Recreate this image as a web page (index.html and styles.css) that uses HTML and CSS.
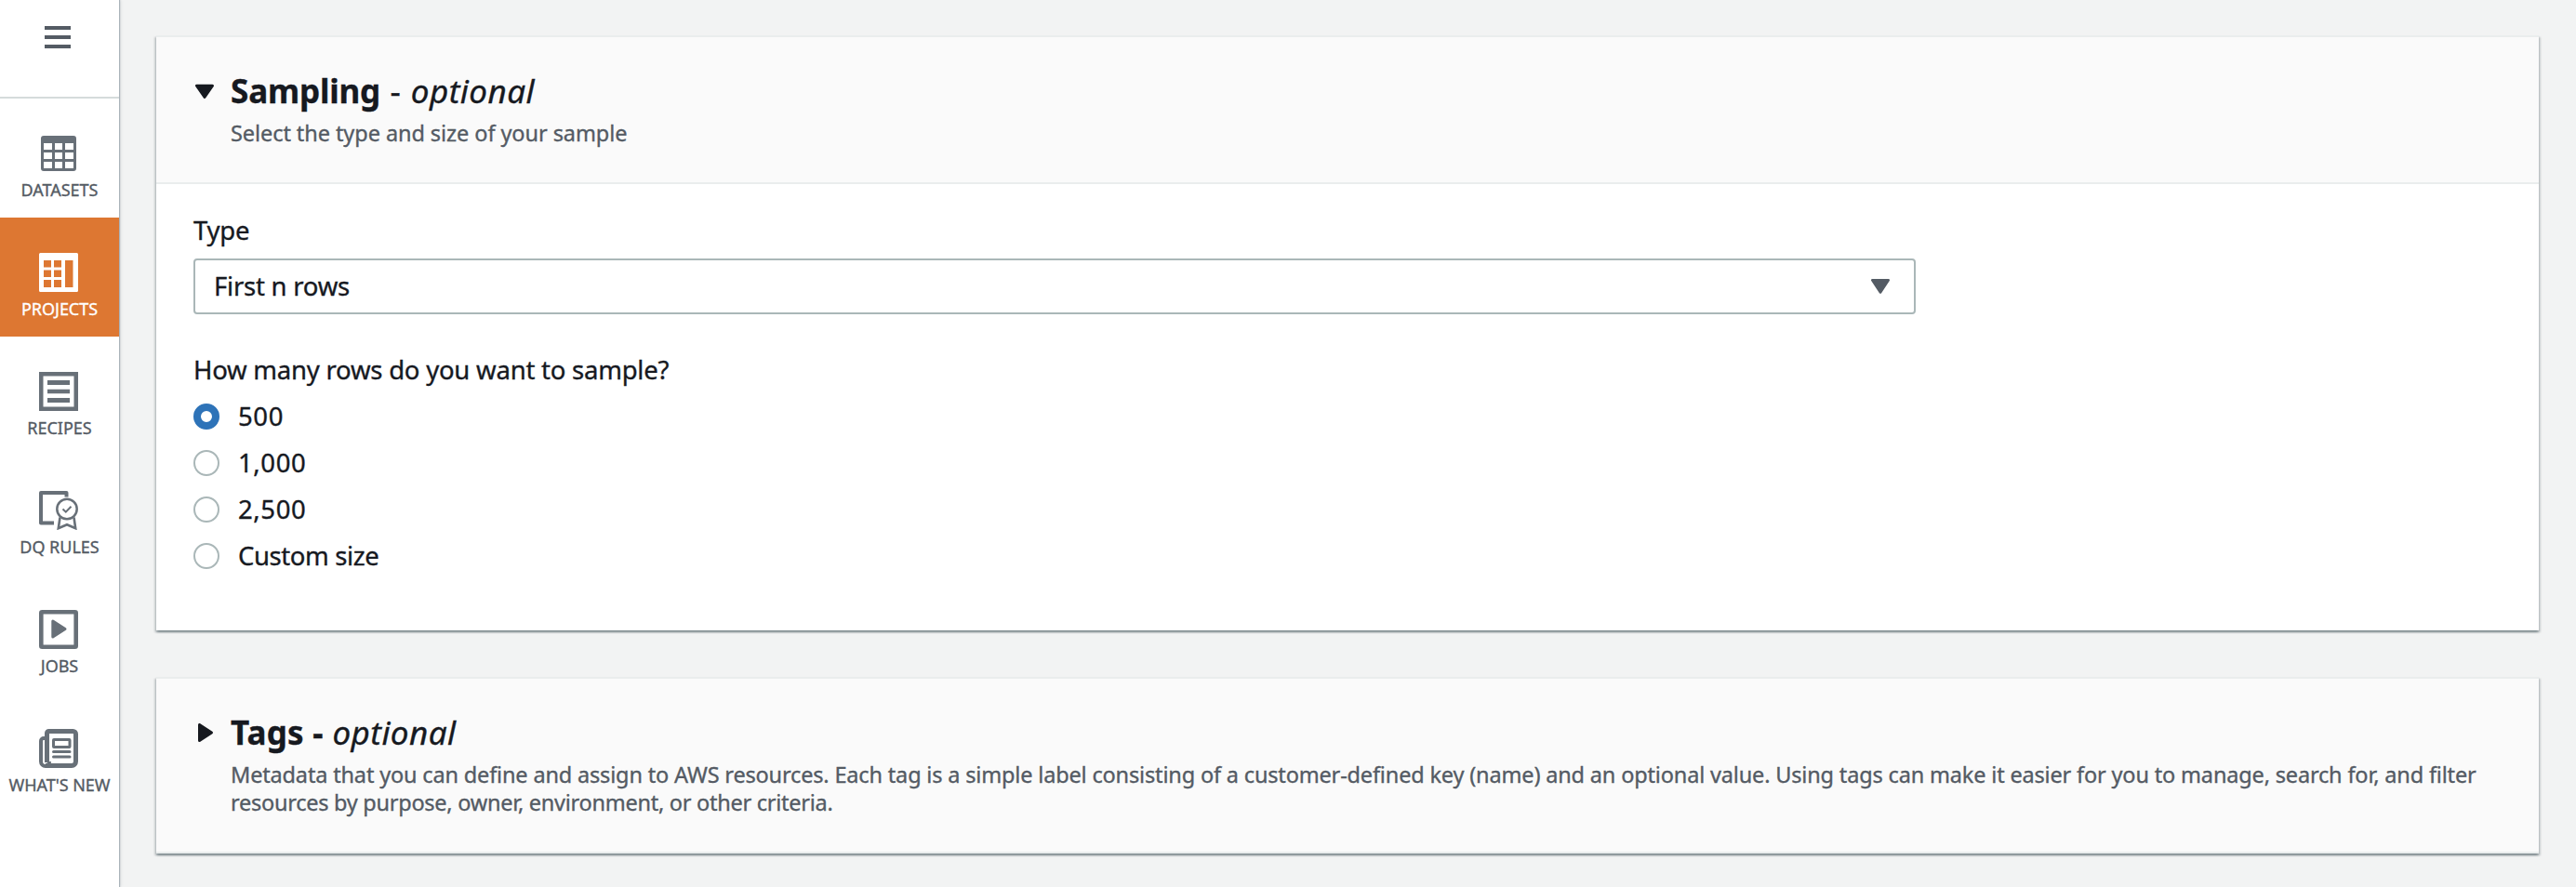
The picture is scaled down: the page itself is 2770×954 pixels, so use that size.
FILE: index.html
```html
<!DOCTYPE html>
<html lang="en">
<head>
<meta charset="utf-8">
<title>Create project</title>
<link rel="stylesheet" href="styles.css">
</head>
<body>
<div class="app">
  <nav class="sidebar">
    <button class="menu" aria-label="Menu"><span class="bar"></span><span class="bar"></span><span class="bar"></span></button>
    <a class="item">
      <svg class="icon" viewBox="0 0 42 42"><path fill="currentColor" fill-rule="evenodd" d="M5 2h32a3 3 0 0 1 3 3v32a3 3 0 0 1-3 3H5a3 3 0 0 1-3-3V5a3 3 0 0 1 3-3zM5 10v7h9v-7zM17 10v7h8v-7zM28 10v7h9v-7zM5 20v7h9v-7zM17 20v7h8v-7zM28 20v7h9v-7zM5 30v7h9v-7zM17 30v7h8v-7zM28 30v7h9v-7z"/></svg>
      <span class="label">DATASETS</span>
    </a>
    <a class="item active">
      <svg class="icon" viewBox="0 0 42 42"><path fill="currentColor" fill-rule="evenodd" d="M1.500 0h39a1.500 1.500 0 0 1 1.500 1.500v39a1.500 1.500 0 0 1-1.500 1.500h-39A1.500 1.500 0 0 1 0 40.500v-39A1.500 1.500 0 0 1 1.500 0zM5 8v7.500h8V8zM16 8v7.500h8V8zM28 8v29h8.500V8zM5 18.500V26h8v-7.500zM16 18.500V26h8v-7.500zM5 29v8h8v-8zM16 29v8h8v-8z"/></svg>
      <span class="label">PROJECTS</span>
    </a>
    <a class="item">
      <svg class="icon" viewBox="0 0 42 42"><path fill="currentColor" fill-rule="evenodd" d="M0 0h42v42H0zM4.500 4.500v33h33v-33zM9 9h24v5H9zM9 18.700h24v4.600H9zM9 28h24v5H9z"/></svg>
      <span class="label">RECIPES</span>
    </a>
    <a class="item">
      <svg class="icon" viewBox="0 0 42 42" fill="none" stroke="currentColor"><path stroke-width="4" stroke-linejoin="round" d="M29.500 6.500V2H2v32.500h14"/><circle cx="30" cy="19.500" r="10.700" stroke-width="2.500"/><path stroke-width="2" d="M25.500 19.500l3.300 3.200 5.700-6"/><path stroke-width="2.600" d="M22.500 28.500l-1.700 11.700 9.200-4 9.200 4-1.700-11.700"/></svg>
      <span class="label">DQ RULES</span>
    </a>
    <a class="item">
      <svg class="icon" viewBox="0 0 42 42"><rect x="2.300" y="2.300" width="37.400" height="37.400" rx="1" fill="none" stroke="currentColor" stroke-width="4.600"/><path fill="currentColor" stroke="currentColor" stroke-width="3" stroke-linejoin="round" d="M14.800 12v17L28 20.500z"/></svg>
      <span class="label">JOBS</span>
    </a>
    <a class="item">
      <svg class="icon" viewBox="0 0 42 42" fill="none" stroke="currentColor"><path stroke-width="5" stroke-linejoin="round" d="M8.500 36V4.500a2 2 0 0 1 2-2h26a3 3 0 0 1 3 3V35a4.500 4.500 0 0 1-4.500 4.500H7"/><path stroke-width="4" d="M8 10H5a3 3 0 0 0-3 3v22a5 5 0 0 0 5 5c3 0 4-2 4-5"/><rect x="15.500" y="11.500" width="17.500" height="8" rx=".5" stroke-width="3"/><path stroke-width="3" stroke-linecap="round" d="M15.500 24.500h17.500M15.500 30h17.500"/></svg>
      <span class="label">WHAT'S NEW</span>
    </a>
  </nav>
  <main class="content">
    <section class="card">
      <header class="card-header">
        <svg class="toggle" viewBox="0 0 20 20"><path d="M1.500 4.200h17L10 16.500z"/></svg>
        <div class="heading">
          <h2 class="title"><span class="name">Sampling</span> <span class="dash">-</span> <em class="optional">optional</em></h2>
          <p class="description">Select the type and size of your sample</p>
        </div>
      </header>
      <div class="card-body">
        <div class="field-label">Type</div>
        <div class="select">
          <span>First n rows</span>
          <svg class="caret" viewBox="0 0 20 16"><path d="M1.300 1.300h17.400L10 14.500z"/></svg>
        </div>
        <div class="field-label question">How many rows do you want to sample?</div>
        <div class="options">
          <label class="option"><span class="radio checked"></span><span class="option-text number">500</span></label>
          <label class="option"><span class="radio"></span><span class="option-text number">1,000</span></label>
          <label class="option"><span class="radio"></span><span class="option-text number">2,500</span></label>
          <label class="option"><span class="radio"></span><span class="option-text">Custom size</span></label>
        </div>
      </div>
    </section>
    <section class="card">
      <header class="card-header">
        <svg class="toggle" viewBox="0 0 20 20"><path d="M4.500 1.500v17L17.500 10z"/></svg>
        <div class="heading">
          <h2 class="title"><span class="name tags">Tags -</span> <em class="optional">optional</em></h2>
          <p class="description long">Metadata that you can define and assign to AWS resources. Each tag is a simple label consisting of a customer-defined key (name) and an optional value. Using tags can make it easier for you to manage, search for, and filter<br><span class="last-line">resources by purpose, owner, environment, or other criteria.</span></p>
        </div>
      </header>
    </section>
  </main>
</div>
</body>
</html>
```

FILE: styles.css
```css
* { box-sizing: border-box; }

body {
  margin: 0;
  background: #f2f3f3;
  color: #16191f;
  font-family: "Noto Sans", "Open Sans", sans-serif;
  font-size: 27.5px;
  letter-spacing: -0.23px;
  -webkit-text-stroke: 0.35px currentColor;
}

.app {
  display: flex;
  height: 954px;
  overflow: hidden;
}

.sidebar {
  flex: none;
  width: 128px;
  background: #fff;
  color: #687078;
  box-shadow: 1px 0 1px #aab3ba, 2px 0 3px rgba(0, 28, 36, 0.1);
}

.menu {
  display: flex;
  flex-direction: column;
  align-items: flex-start;
  gap: 6px;
  width: 100%;
  height: 106px;
  padding: 28px 48px;
  border: 0;
  border-bottom: 2px solid #d5dbdb;
  background: none;
}

.bar {
  width: 28px;
  height: 4px;
  background: #545b64;
}

.item {
  display: flex;
  flex-direction: column;
  align-items: center;
  height: 128px;
  padding-top: 38px;
}

.item.active {
  background: #dd7732;
  color: #fff;
}

.icon {
  flex: none;
  width: 42px;
  height: 42px;
  margin-right: 2px;
}

.label {
  margin-top: 5px;
  font-size: 18px;
  line-height: 26px;
  letter-spacing: -0.02px;
  white-space: nowrap;
  color: #545b64;
}

.active .label { color: #fff; }

.content {
  flex: 1;
  display: flex;
  flex-direction: column;
  gap: 50px;
  padding: 38px 40px 0;
}

.card {
  border-top: 2px solid #eaeded;
  background: #fff;
  box-shadow: 0 2px 2px rgba(0, 28, 36, 0.3), 2px 2px 2px rgba(0, 28, 36, 0.15), -2px 2px 2px rgba(0, 28, 36, 0.15);
}

.card-header {
  display: flex;
  gap: 18px;
  padding: 36px 40px 38px 42px;
  border-bottom: 2px solid #eaeded;
  background: #fafafa;
}

.toggle {
  flex: none;
  width: 20px;
  height: 20px;
  margin-top: 12px;
  fill: #16191f;
  stroke: #16191f;
  stroke-width: 3px;
  stroke-linejoin: round;
}

.title {
  margin: 0 0 8px;
  font-size: 35px;
  font-weight: 400;
  line-height: 44px;
  white-space: nowrap;
}

.name {
  font-weight: 700;
  letter-spacing: -0.15px;
}

.name.tags { letter-spacing: 0.2px; }

.dash {
  display: inline-block;
  margin: 0 1.5px;
}

.optional {
  margin-left: 1px;
  letter-spacing: 0.45px;
}

.description {
  margin: 0;
  color: #545b64;
  font-size: 23.5px;
  line-height: 30px;
  letter-spacing: -0.07px;
  white-space: nowrap;
}

.description.long { letter-spacing: -0.163px; }

.last-line { letter-spacing: -0.26px; }

.card-body {
  height: 480px;
  padding: 30px 40px 0;
}

.field-label { line-height: 40px; }

.question { margin-top: 40px; }

.select {
  display: flex;
  align-items: center;
  justify-content: space-between;
  width: 1852px;
  height: 60px;
  margin-top: 10px;
  padding: 0 26px 0 20px;
  border: 2px solid #aab7b8;
  border-radius: 4px;
}

.select span { padding-bottom: 2px; }

.caret {
  width: 20px;
  height: 16px;
  fill: #545b64;
  stroke: #545b64;
  stroke-width: 2.6px;
  stroke-linejoin: round;
}

.options { margin-top: 5px; }

.option {
  display: flex;
  align-items: center;
  gap: 20px;
  height: 50px;
}

.option-text {
  padding-bottom: 2px;
  letter-spacing: -0.4px;
}

.option-text.number { letter-spacing: 0.6px; }

.radio {
  width: 28px;
  height: 28px;
  border: 2px solid #aab7b8;
  border-radius: 50%;
}

.radio.checked { border: 8px solid #2e73b8; }
```
